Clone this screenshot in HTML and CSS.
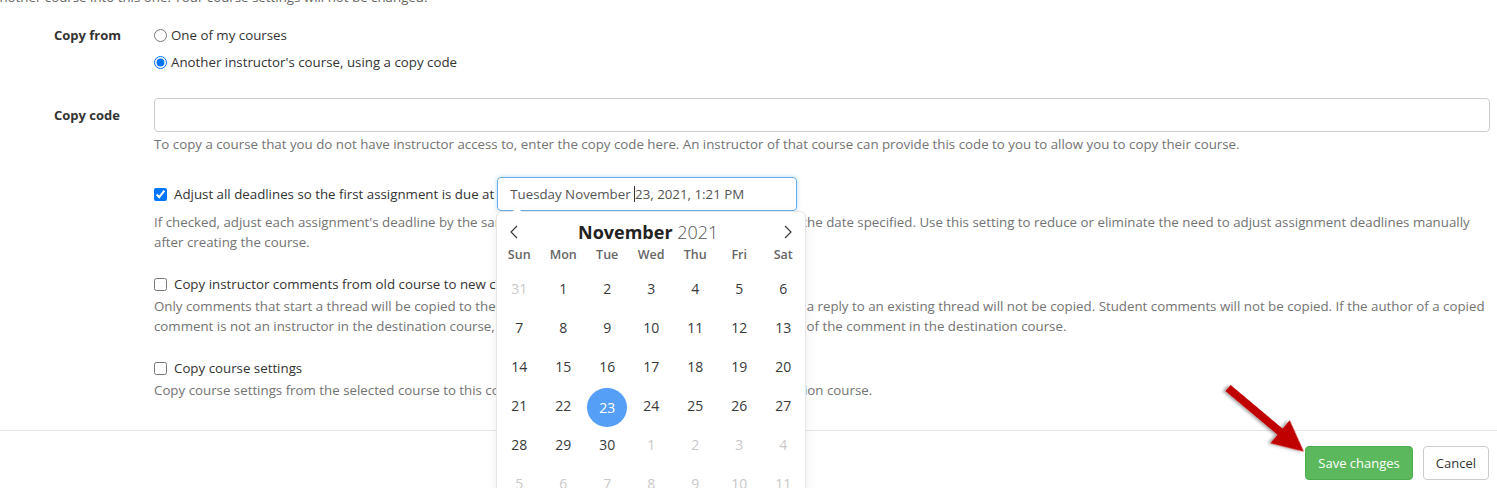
FILE: index.html
```html
<!DOCTYPE html>
<html>
<head>
<meta charset="utf-8">
<link rel="stylesheet" href="styles.css">
</head>
<body>
<div class="modal">
  <div class="modal-body">
    <p class="note">Another course into this one. Your course settings will not be changed.</p>

    <div class="group group-from">
      <div class="label">Copy from</div>
      <div class="control radios">
        <label class="radio"><input type="radio" name="from"> One of my courses</label>
        <label class="radio"><input type="radio" name="from" checked> Another instructor's course, using a copy code</label>
      </div>
    </div>

    <div class="group group-code">
      <div class="label label-input">Copy code</div>
      <div class="control">
        <div class="text-input"></div>
        <p class="help">To copy a course that you do not have instructor access to, enter the copy code here. An instructor of that course can provide this code to you to allow you to copy their course.</p>
      </div>
    </div>

    <div class="group group-adjust">
      <div class="label"></div>
      <div class="control">
        <div class="check-line">
          <label class="check"><input type="checkbox" checked> Adjust all deadlines so the first assignment is due at</label>
          <div class="date-wrap">
            <div class="date-input">Tuesday November <span class="caret"></span>23, 2021, 1:21 PM</div>
            <div class="calendar">
              <div class="cal-head">
                <svg class="cal-arrow" width="12" height="14" viewBox="0 0 12 14"><path d="M9 1 L3 7 L9 13" fill="none" stroke="#3c3c3c" stroke-width="1.2"/></svg>
                <div class="cal-title"><span class="cal-month">November</span> <span class="cal-year">2021</span></div>
                <svg class="cal-arrow" width="12" height="14" viewBox="0 0 12 14"><path d="M3 1 L9 7 L3 13" fill="none" stroke="#3c3c3c" stroke-width="1.2"/></svg>
              </div>
              <div class="cal-grid">
                <span class="wd">Sun</span><span class="wd">Mon</span><span class="wd">Tue</span><span class="wd">Wed</span><span class="wd">Thu</span><span class="wd">Fri</span><span class="wd">Sat</span>
                <span class="d dim">31</span><span class="d">1</span><span class="d">2</span><span class="d">3</span><span class="d">4</span><span class="d">5</span><span class="d">6</span>
                <span class="d">7</span><span class="d">8</span><span class="d">9</span><span class="d">10</span><span class="d">11</span><span class="d">12</span><span class="d">13</span>
                <span class="d">14</span><span class="d">15</span><span class="d">16</span><span class="d">17</span><span class="d">18</span><span class="d">19</span><span class="d">20</span>
                <span class="d">21</span><span class="d">22</span><span class="d sel">23</span><span class="d">24</span><span class="d">25</span><span class="d">26</span><span class="d">27</span>
                <span class="d">28</span><span class="d">29</span><span class="d">30</span><span class="d dim">1</span><span class="d dim">2</span><span class="d dim">3</span><span class="d dim">4</span>
                <span class="d dim">5</span><span class="d dim">6</span><span class="d dim">7</span><span class="d dim">8</span><span class="d dim">9</span><span class="d dim">10</span><span class="d dim">11</span>
              </div>
            </div>
          </div>
        </div>
        <p class="help help-adjust">If checked, adjust each assignment's deadline by the same amount of time so that the first one is due on the date specified. Use this setting to reduce or eliminate the need to adjust assignment deadlines manually after creating the course.</p>
      </div>
    </div>

    <div class="group group-comments">
      <div class="label"></div>
      <div class="control">
        <label class="check check-plain"><input type="checkbox"> Copy instructor comments from old course to new course</label>
        <p class="help help-tight">Only comments that start a thread will be copied to the new course. Any comment that was submitted as a reply to an existing thread will not be copied. Student comments will not be copied. If the author of a copied comment is not an instructor in the destination course, you will be automatically listed as the new author of the comment in the destination course.</p>
      </div>
    </div>

    <div class="group group-settings">
      <div class="label"></div>
      <div class="control">
        <label class="check check-plain"><input type="checkbox"> Copy course settings</label>
        <p class="help help-tight">Copy course settings from the selected course to this course. Current settings will be reset in the destination course.</p>
      </div>
    </div>
  </div>

  <div class="modal-footer">
    <button class="btn btn-save">Save changes</button>
    <button class="btn btn-cancel">Cancel</button>
  </div>
</div>

<svg class="pointer" width="110" height="100" viewBox="0 0 110 100">
  <defs>
    <filter id="sh" x="-20%" y="-20%" width="140%" height="140%">
      <feDropShadow dx="-2" dy="2" stdDeviation="1.5" flood-color="#000" flood-opacity="0.35"/>
    </filter>
  </defs>
  <g transform="translate(12 10) rotate(40)" filter="url(#sh)">
    <polygon points="0,-4 68,-4 68,-15 99,0 68,15 68,4 0,4" fill="#c00000"/>
  </g>
</svg>
</body>
</html>
```

FILE: styles.css
```css
html { overflow: hidden; }
body {
  margin: 0;
  font-family: "Open Sans", "Liberation Sans", Arial, sans-serif;
  font-size: 13.3px;
  color: #333;
  background: #fff;
  position: relative;
  height: 488px;
}
p { margin: 0; }
.modal-body {
  padding: 0 7px 0 54px;
}
.note {
  margin: -13px 0 0 -63px;
  line-height: 20px;
  color: #666;
}
.group {
  display: grid;
  grid-template-columns: 100px 1fr;
}
.label {
  font-weight: bold;
  line-height: 20px;
  font-size: 13px;
}
.label-input { padding-top: 7px; }
.control { min-width: 0; }
.group-from { margin-top: 18px; }
.radios { display: flex; flex-direction: column; gap: 7px; }
.radio, .check {
  display: flex;
  align-items: center;
  line-height: 20px;
}
.radio input {
  margin: 0 4px 0 0;
  width: 13px;
  height: 13px;
}
.check input {
  margin: 0 7px 0 0;
  width: 13px;
  height: 13px;
}
.group-code { margin-top: 26px; }
.text-input {
  height: 32px;
  border: 1px solid #ccc;
  border-radius: 4px;
}
.help {
  color: #737373;
  line-height: 20px;
  margin-top: 2px;
}
.group-adjust { margin-top: 23px; }
.check-line {
  display: flex;
  align-items: center;
}
.date-wrap {
  position: relative;
  margin-left: 3px;
}
.date-input {
  width: 286px;
  height: 32px;
  line-height: 32px;
  padding-left: 12px;
  border: 1px solid #66afe9;
  border-radius: 4px;
  box-shadow: 0 0 4px rgba(102, 175, 233, 0.5);
  color: #555;
  white-space: nowrap;
}
.caret {
  display: inline-block;
  width: 1px;
  height: 16px;
  background: #333;
  vertical-align: -3px;
}
.help-adjust { margin-top: 1px; }
.calendar {
  position: absolute;
  left: 0;
  top: 35px;
  width: 308px;
  height: 300px;
  background: #fff;
  border-radius: 5px;
  box-shadow: 1px 0 0 #e6e6e6, -1px 0 0 #e6e6e6, 0 1px 0 #e6e6e6, 0 -1px 0 #e6e6e6, 0 3px 13px rgba(0, 0, 0, 0.08);
  z-index: 5;
}
.calendar::before {
  content: "";
  position: absolute;
  left: 15px;
  top: -5px;
  border: 5px solid transparent;
  border-top: 0;
  border-bottom-color: #fff;
}
.cal-head {
  display: flex;
  align-items: center;
  justify-content: space-between;
  padding: 8px 11px 0 11px;
  height: 24px;
}
.cal-title {
  font-size: 18px;
  line-height: 22px;
  margin-left: -6px;
}
.cal-month { font-weight: 700; color: #222; }
.cal-year { font-weight: 300; color: #555; }
.cal-grid {
  display: grid;
  grid-template-columns: repeat(7, 44px);
  grid-template-rows: 24px;
  grid-auto-rows: 39px;
  margin-top: -1px;
}
.wd {
  font-weight: 600;
  color: #666;
  font-size: 12.5px;
  text-align: center;
  height: 24px;
  line-height: 24px;
}
.d {
  font-size: 14px;
  color: #393939;
  display: flex;
  align-items: center;
  justify-content: center;
  margin-top: 4px;
}
.d.dim { color: #c9c9c9; }
.d.sel {
  color: #fff;
  background: #569ff7;
  border-radius: 50%;
  width: 40px;
  height: 39px;
  margin: 4px auto 0;
}
.group-comments { margin-top: 22px; }
.help-tight { margin-top: 2px; }
.group-settings { margin-top: 22px; }
.modal-footer {
  margin-top: 30px;
  border-top: 1px solid #e5e5e5;
  padding: 15px 8px 0 0;
  display: flex;
  justify-content: flex-end;
  gap: 10px;
}
.btn {
  font-family: "Open Sans", "Liberation Sans", Arial, sans-serif;
  font-size: 13px;
  height: 34px;
  padding: 0 12px;
  border-radius: 4px;
  cursor: pointer;
}
.btn-save {
  background: #5cb85c;
  border: 1px solid #4cae4c;
  color: #fff;
}
.btn-cancel {
  background: #fff;
  border: 1px solid #ccc;
  color: #333;
}
.pointer {
  position: absolute;
  left: 1216px;
  top: 378px;
  z-index: 10;
}
```
